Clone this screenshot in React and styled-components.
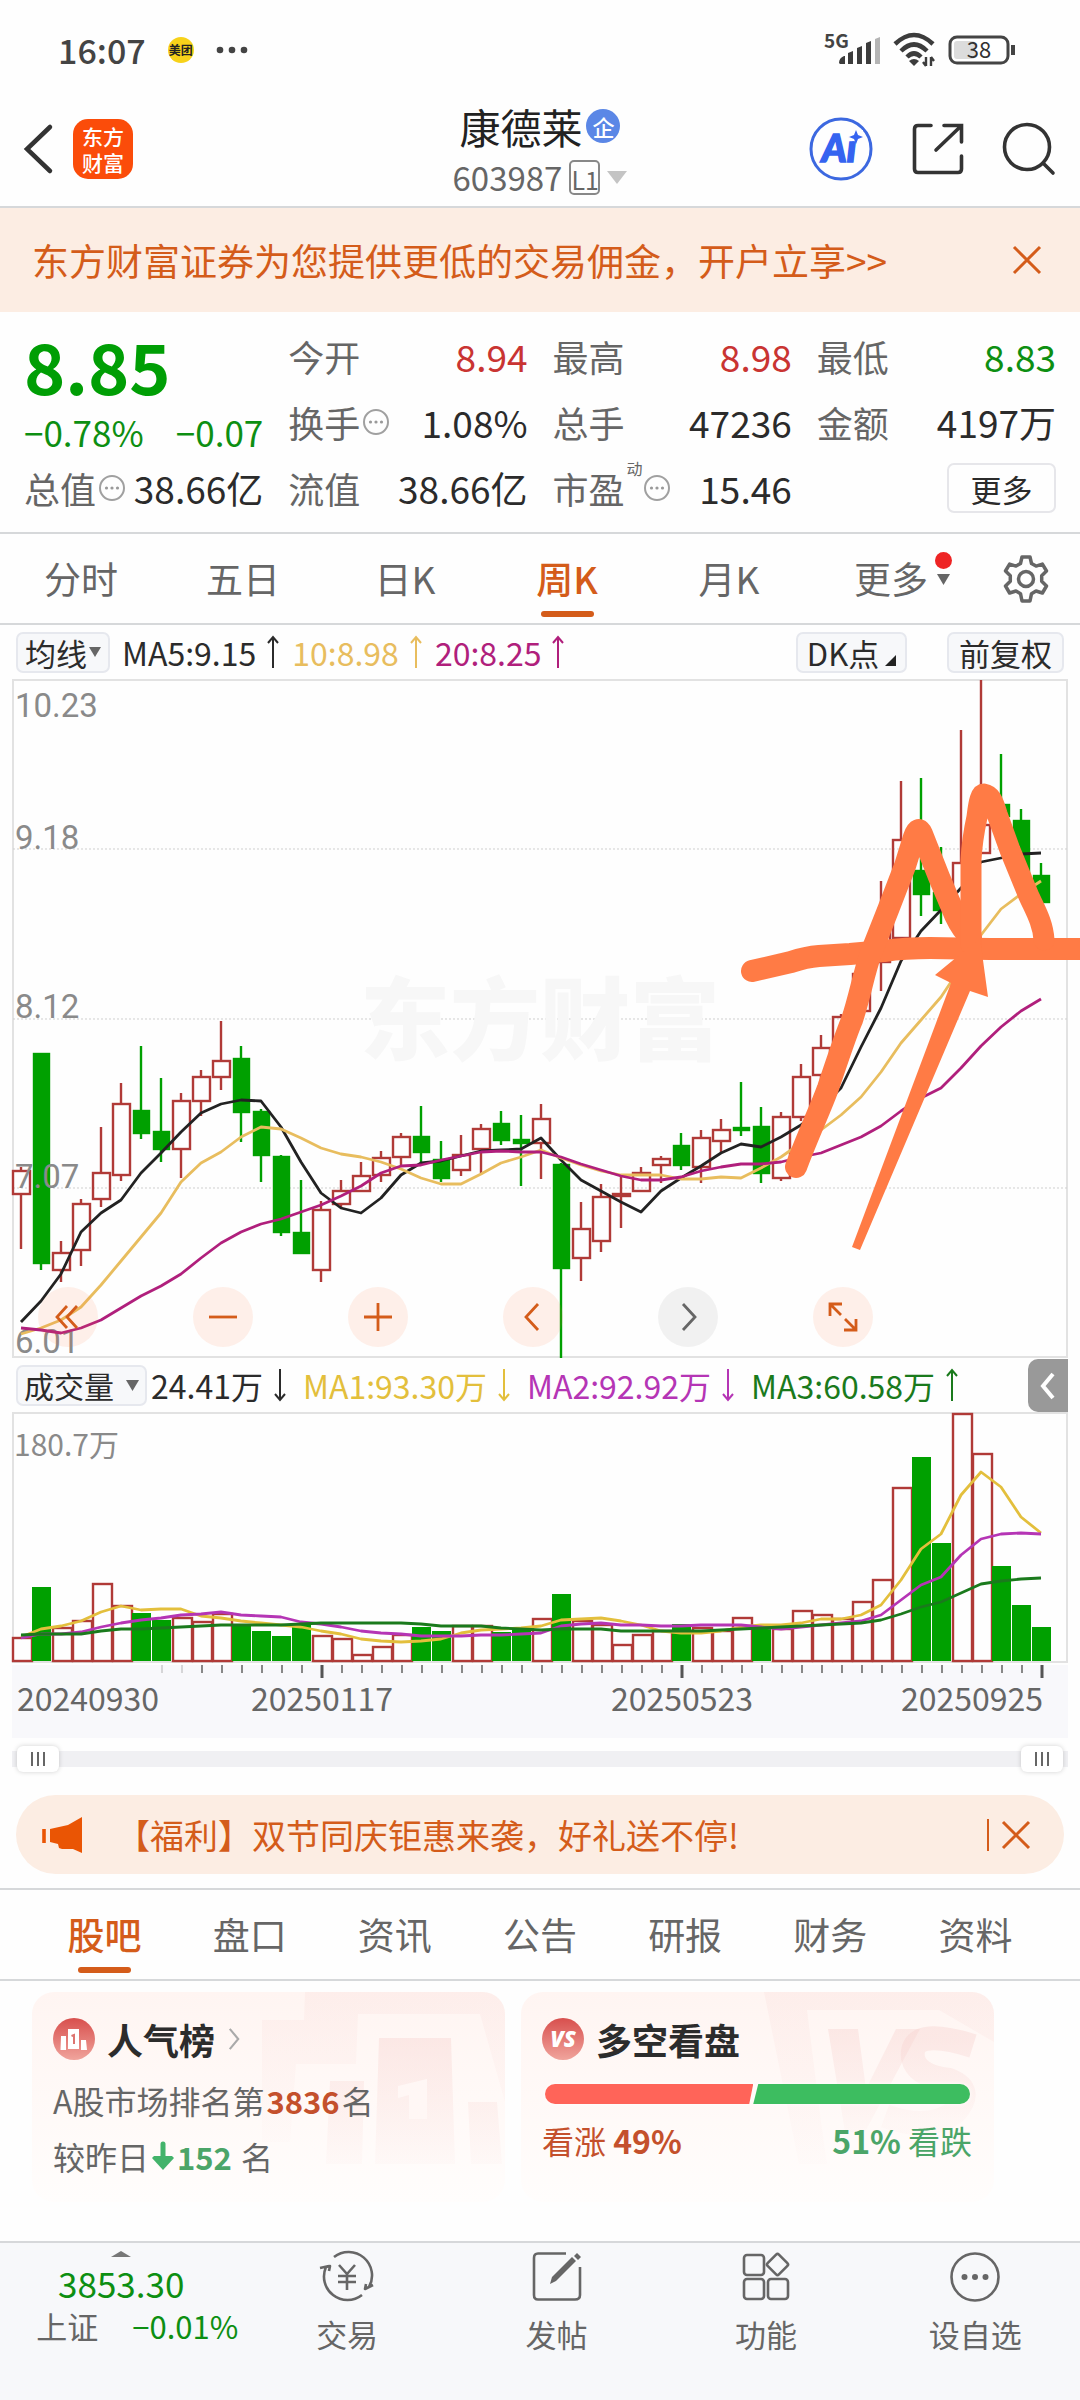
import React, { useState } from "react";
import styled, { createGlobalStyle, css } from "styled-components";

const color = {
  up: "#c93432",
  down: "#0d8f12",
  candleUp: "#b03a37",
  candleDown: "#00a000",
  accent: "#d45c1a",
  text: "#2b2b2b",
  muted: "#666",
  faint: "#8a8a8a",
  line: "#d6d8da",
  peach: "#fcede3",
  panel: "#f7f8fa",
  ma5: "#222",
  ma10: "#e8bd5e",
  ma20: "#b01f7c",
  vol1: "#e3bf3c",
  vol2: "#b535b5",
  vol3: "#1a7a1c",
  marker: "#ff7b45",
};

const GlobalStyle = createGlobalStyle`
  *, *::before, *::after { box-sizing: border-box; }
  body {
    margin: 0;
    background: #fefefe;
    color: ${color.text};
    font-family: "Noto Sans CJK SC", "Noto Sans", sans-serif;
    font-size: 32px;
    line-height: 1;
  }
  button { font: inherit; color: inherit; background: none; border: 0; padding: 0; margin: 0; cursor: pointer; }
  a { color: inherit; text-decoration: none; }
  svg { display: block; flex: none; overflow: visible; }
  h1, h2, p, dl, dd, dt { margin: 0; font-weight: 400; }
`;

const Page = styled.div`
  display: flex;
  flex-direction: column;
  min-height: 100vh;
  overflow-x: clip;
`;

/* Status bar */
const StatusBar = styled.div`
  display: flex;
  align-items: center;
  justify-content: space-between;
  height: 100px;
  padding: 0 64px 0 58px;
`;
const StatusGroup = styled.div`
  display: flex;
  align-items: center;
  gap: ${(p) => p.$gap}px;
`;
const Clock = styled.span`
  font-size: 34px;
  font-weight: 500;
  color: #444;
`;
const AppDot = styled.span`
  display: grid;
  place-items: center;
  width: 26px;
  height: 26px;
  border-radius: 50%;
  background: #f7d21a;
  color: #222;
  font-size: 12px;
  font-weight: 700;
  white-space: nowrap;
`;

/* Header */
const Header = styled.header`
  display: grid;
  grid-template-columns: 1fr auto 1fr;
  align-items: center;
  height: 108px;
  padding: 0 24px 8px;
  border-bottom: 2px solid ${color.line};
`;
const HeaderSide = styled.div`
  display: flex;
  align-items: center;
  justify-content: ${(p) => (p.$end ? "flex-end" : "flex-start")};
  gap: ${(p) => (p.$end ? 38 : 20)}px;
`;
const BrandLogo = styled.a`
  display: grid;
  place-content: center;
  width: 60px;
  height: 60px;
  border-radius: 15px;
  background: #fb4c0a;
  color: #fff;
  font-size: 21px;
  line-height: 26px;
  font-weight: 500;
  text-align: center;
`;
const TitleBlock = styled.div`
  display: flex;
  flex-direction: column;
  align-items: center;
  gap: 12px;
`;
const TitleRow = styled.div`
  display: flex;
  align-items: center;
  gap: 4px;
`;
const StockName = styled.h1`
  font-size: 41px;
  line-height: 44px;
  color: #222;
`;
const CompanyBadge = styled.span`
  display: grid;
  place-items: center;
  width: 34px;
  height: 34px;
  border-radius: 50%;
  background: #5b87e6;
  color: #fff;
  font-size: 22px;
  font-weight: 500;
`;
const CodeButton = styled.button`
  display: flex;
  align-items: center;
  gap: 7px;
  color: ${color.muted};
  font-size: 33px;
  line-height: 34px;
`;
const LevelTag = styled.span`
  display: grid;
  place-items: center;
  width: 31px;
  height: 35px;
  border: 2px solid #888;
  border-radius: 5px;
  font-size: 25px;
`;
const IconButton = styled.button`
  display: grid;
  place-items: center;
`;

/* Broker banner */
const Banner = styled.div`
  display: flex;
  align-items: center;
  justify-content: space-between;
  height: 104px;
  padding: 0 39px 0 32px;
  background: ${color.peach};
  color: ${color.accent};
`;
const BannerLink = styled.a`
  font-size: 37px;
  white-space: nowrap;
`;

/* Quote */
const Quote = styled.section`
  display: grid;
  grid-template-columns: repeat(4, 1fr);
  grid-template-rows: repeat(3, 66px);
  column-gap: 25px;
  height: 222px;
  padding: 11px 24px 0;
  border-bottom: 2px solid ${color.line};
`;
const PriceBox = styled.div`
  grid-row: span 2;
  display: flex;
  flex-direction: column;
  justify-content: space-between;
  padding: 5px 0 6px;
  color: ${color.down};
`;
const Price = styled.strong`
  font-size: 70px;
  line-height: 74px;
  font-weight: 700;
  color: #009e05;
`;
const PriceChange = styled.div`
  display: flex;
  justify-content: space-between;
  font-size: 35px;
  line-height: 35px;
`;
const Stat = styled.dl`
  display: flex;
  align-items: center;
  justify-content: space-between;
  white-space: nowrap;
`;
const StatLabel = styled.dt`
  display: flex;
  align-items: center;
  gap: 2px;
  font-size: 36px;
  color: ${color.muted};
`;
const StatNote = styled.sup`
  align-self: flex-start;
  font-size: 16px;
  line-height: 16px;
  margin: -10px -2px 0 0;
`;
const StatValue = styled.dd`
  font-size: 37px;
  color: ${(p) => p.$tone || color.text};
`;
const MoreButton = styled.button`
  align-self: center;
  justify-self: end;
  width: 109px;
  height: 50px;
  border: 2px solid #e6e6ea;
  border-radius: 7px;
  font-size: 31px;
`;

/* Tabs */
const PeriodTabs = styled.nav`
  display: grid;
  grid-template-columns: repeat(6, 162fr) 108fr;
  height: 91px;
  border-bottom: 2px solid ${color.line};
`;
const SectionTabs = styled.nav`
  display: grid;
  grid-template-columns: repeat(7, 1fr);
  height: 93px;
  margin-top: 14px;
  padding: 0 32px;
  border-top: 2px solid ${color.line};
  border-bottom: 2px solid ${color.line};
`;
const Tab = styled.button`
  display: flex;
  align-items: center;
  justify-content: center;
  position: relative;
  font-size: 37px;
  color: ${(p) => (p.$active ? color.accent : color.muted)};
  font-weight: ${(p) => (p.$active ? 500 : 400)};
  ${(p) =>
    p.$active &&
    css`
      &::after {
        content: "";
        position: absolute;
        bottom: 6px;
        width: 53px;
        height: 6px;
        border-radius: 3px;
        background: ${color.accent};
      }
    `}
`;
const TabMarks = styled.span`
  position: absolute;
  right: 20px;
  top: 18px;
  display: grid;
  justify-items: center;
  gap: 5px;
`;
const RedDot = styled.i`
  width: 17px;
  height: 17px;
  border-radius: 50%;
  background: #ee2424;
`;

/* Chart legends */
const Legend = styled.div`
  display: flex;
  align-items: center;
  height: 54px;
  padding: 0 16px;
  gap: ${(p) => p.$gap || 12}px;
  white-space: nowrap;
`;
const LegendItems = styled.div`
  display: flex;
  gap: 16px;
`;
const Chip = styled.button`
  display: flex;
  align-items: center;
  justify-content: center;
  gap: ${(p) => p.$gap || 2}px;
  width: ${(p) => p.$w}px;
  height: 41px;
  border: 2px solid #e6e8ee;
  border-radius: 7px;
  background: ${color.panel};
  font-size: ${(p) => p.$size || 31}px;
`;
const LegendItem = styled.span`
  display: flex;
  align-items: center;
  gap: 10px;
  color: ${(p) => p.$tone};
`;
const Spacer = styled.span`
  flex: 1;
`;
const ChipGroup = styled.div`
  display: flex;
  gap: 40px;
`;
const CollapseButton = styled.button`
  display: grid;
  place-items: center;
  align-self: stretch;
  width: 40px;
  margin: 1px -4px 0 0;
  border-radius: 10px 0 0 10px;
  background: #999;
`;

/* Charts */
const ChartFrame = styled.div`
  position: relative;
  svg.plot {
    width: 100%;
    height: auto;
  }
`;
const ChartControls = styled.div`
  position: absolute;
  left: 0;
  right: 0;
  bottom: 11px;
  display: flex;
  gap: 95px;
  padding-left: 38px;
`;
const RoundButton = styled.button`
  display: grid;
  place-items: center;
  width: 60px;
  height: 60px;
  border-radius: 50%;
  background: ${(p) => (p.$plain ? "rgba(0,0,0,.05)" : "rgba(255,120,60,.11)")};
`;

/* Range */
const RangeBar = styled.div`
  display: grid;
  align-items: center;
  height: 40px;
  margin: 0 12px;
  padding: 0 5px;
  border-radius: 8px;
  background: linear-gradient(#f0f0f3, #f0f0f3) center / 100% 16px no-repeat;
`;
const thumb = css`
  appearance: none;
  pointer-events: auto;
  width: 42px;
  height: 26px;
  border: 0;
  border-radius: 6px;
  background:
    linear-gradient(90deg, #666 2px, transparent 2px 6px, #666 6px 8px, transparent 8px 12px, #666 12px 14px) center / 14px 14px no-repeat,
    #fff;
  box-shadow: 0 0 5px rgba(0, 0, 0, 0.18);
`;
const RangeInput = styled.input`
  grid-area: 1 / 1;
  appearance: none;
  pointer-events: none;
  width: 100%;
  height: 26px;
  margin: 0;
  background: none;
  &::-webkit-slider-thumb { ${thumb} }
`;

/* Promo */
const Promo = styled.div`
  display: flex;
  align-items: center;
  height: 79px;
  margin: 16px 16px 0;
  padding: 0 34px 0 24px;
  border-radius: 40px;
  background: ${color.peach};
  color: ${color.accent};
`;
const PromoLink = styled.a`
  flex: 1;
  margin-left: 32px;
  font-size: 34px;
  white-space: nowrap;
`;
const PromoClose = styled.button`
  display: grid;
  place-items: center;
  height: 32px;
  padding-left: 13px;
  border-left: 2px solid ${color.accent};
`;

/* Cards */
const Cards = styled.section`
  display: grid;
  grid-template-columns: 1fr 1fr;
  gap: 16px;
  padding: 11px 86px 39px 32px;
`;
const Card = styled.article`
  position: relative;
  overflow: hidden;
  display: flex;
  flex-direction: column;
  height: 210px;
  padding: 26px 22px 0 21px;
  border-radius: 22px;
  background: linear-gradient(#fff5f2, #fffdfc);
  color: ${color.muted};
`;
const CardArt = styled.svg`
  position: absolute;
  right: 0;
  top: 0;
`;
const CardHead = styled.a`
  position: relative;
  display: flex;
  align-items: center;
  gap: 12px;
  height: 42px;
`;
const CardTitle = styled.h2`
  font-size: 36px;
  font-weight: 700;
  color: #2c2c2c;
`;
const CardLine = styled.p`
  position: relative;
  display: flex;
  align-items: center;
  gap: 2px;
  height: 56px;
  font-size: 32px;
`;
const CardBody = styled.div`
  margin-top: 12px;
`;
const Figure = styled.b`
  font-weight: 700;
  font-size: 31px;
  color: ${(p) => p.$tone};
`;
const VoteBar = styled.div`
  position: relative;
  display: flex;
  height: 20px;
  margin: 24px 2px 0 3px;
  filter: drop-shadow(0 0 2px #fff);
`;
const VoteShare = styled.span`
  background: ${(p) => (p.$bear ? "#3dbd60" : "#ff6459")};
  border-radius: ${(p) => (p.$bear ? "0 10px 10px 0" : "10px 0 0 10px")};
  clip-path: ${(p) =>
    p.$bear
      ? "polygon(5px 0, 100% 0, 100% 100%, 0 100%)"
      : "polygon(0 0, 100% 0, calc(100% - 4px) 100%, 0 100%)"};
`;
const VoteLabels = styled.div`
  position: relative;
  display: flex;
  justify-content: space-between;
  margin-top: 19px;
  font-size: 32px;
  line-height: 34px;
`;
const VoteLabel = styled.span`
  color: ${(p) => p.$tone};
`;

/* Bottom bar */
const BottomBar = styled.nav`
  flex: 1;
  display: grid;
  grid-template-columns: 242fr repeat(4, 209fr);
  align-items: start;
  min-height: 159px;
  border-top: 2px solid ${color.line};
  background: ${color.panel};
`;
const IndexButton = styled.button`
  display: flex;
  flex-direction: column;
  align-items: center;
  padding-top: 8px;
  color: ${color.down};
`;
const IndexValue = styled.span`
  margin-top: 8px;
  font-size: 35px;
  line-height: 35px;
`;
const IndexRow = styled.span`
  display: flex;
  justify-content: space-between;
  width: 202px;
  margin: 9px 0 0 32px;
  font-size: 31px;
  line-height: 34px;
`;
const MutedText = styled.span`
  color: ${color.muted};
`;
const NavButton = styled.button`
  display: flex;
  flex-direction: column;
  align-items: center;
  gap: 14px;
  padding-top: 8px;
  color: ${color.muted};
  font-size: 31px;
  line-height: 34px;
`;

/* Data: [rising, high, bodyTop, bodyBottom, low] in plot units */
const CANDLES = [
  [1,1167,1171,1194,1249],[0,1053,1054,1263,1270],[1,1241,1253,1270,1282],[1,1199,1204,1250,1266],
  [1,1127,1173,1199,1207],[1,1083,1104,1175,1181],[0,1046,1111,1133,1139],[0,1078,1132,1149,1162],
  [1,1093,1101,1149,1178],[1,1070,1077,1101,1116],[1,1021,1061,1077,1090],[0,1046,1059,1112,1142],
  [0,1109,1112,1155,1182],[0,1155,1157,1232,1236],[0,1180,1233,1253,1254],[1,1201,1210,1270,1282],
  [1,1180,1191,1204,1208],[1,1162,1176,1191,1191],[1,1151,1158,1175,1182],[1,1133,1137,1157,1165],
  [0,1106,1137,1152,1163],[0,1141,1160,1178,1182],[1,1135,1155,1170,1176],[1,1124,1129,1149,1173],
  [0,1111,1124,1140,1145],[0,1115,1140,1143,1186],[1,1104,1119,1143,1179],[0,1163,1165,1268,1358],
  [1,1202,1229,1258,1281],[1,1184,1197,1241,1252],[1,1177,1194,1196,1228],[1,1167,1173,1191,1191],
  [1,1156,1159,1165,1183],[0,1133,1146,1165,1170],[1,1130,1138,1167,1183],[1,1119,1130,1141,1152],
  [0,1082,1128,1130,1136],[0,1107,1127,1173,1183],[1,1112,1117,1178,1181],[1,1064,1077,1117,1121],
  [1,1035,1048,1075,1085],[1,1014,1017,1050,1050],[1,960,974,1011,1011],[1,881,927,962,991],
  [1,781,840,938,938],[0,778,871,894,916],[0,847,893,910,924],[1,730,863,905,905],
  [1,680,825,853,853],[0,754,805,816,816],[0,809,821,876,876],[0,863,876,902,907],
];
const MA5 = [1322,1301,1274,1232,1213,1200,1173,1153,1132,1113,1104,1100,1101,1127,1162,1193,1208,1213,1198,1175,1163,1161,1156,1151,1150,1149,1138,1160,1180,1191,1202,1212,1191,1178,1166,1153,1144,1147,1137,1125,1108,1088,1047,1008,961,931,910,888,862,858,854,853];
const MA10 = [1334,1328,1320,1307,1285,1261,1237,1213,1182,1163,1152,1137,1127,1129,1138,1148,1154,1157,1162,1169,1178,1184,1184,1174,1163,1157,1150,1158,1165,1171,1175,1175,1175,1179,1179,1177,1178,1168,1157,1143,1130,1115,1097,1072,1043,1020,997,967,935,909,894,881];
const MA20 = [1328,1330,1333,1328,1320,1308,1296,1286,1274,1258,1243,1232,1224,1219,1212,1205,1196,1186,1173,1166,1165,1160,1156,1152,1151,1152,1152,1157,1164,1170,1176,1180,1180,1177,1171,1167,1164,1164,1162,1157,1153,1145,1137,1126,1111,1098,1088,1068,1046,1027,1011,999];
const VOLUME_TOPS = [1638,1588,1628,1621,1584,1606,1614,1621,1618,1622,1614,1625,1632,1637,1626,1636,1639,1655,1647,1635,1628,1632,1626,1626,1633,1629,1619,1595,1621,1625,1645,1635,1631,1625,1628,1631,1618,1627,1629,1611,1615,1619,1602,1580,1488,1458,1544,1414,1454,1567,1606,1628];
const VOLUME_UP = CANDLES.map((c, i) => (i === 36 ? 1 : c[0]));
const VMA1 = [1637,1629,1626,1621,1612,1606,1610,1609,1609,1616,1618,1621,1623,1625,1627,1631,1634,1639,1641,1642,1641,1639,1633,1630,1629,1628,1626,1620,1619,1618,1621,1625,1631,1633,1633,1631,1627,1625,1625,1623,1619,1619,1615,1605,1580,1549,1534,1495,1472,1487,1517,1533];
const VMA2 = [1638,1634,1634,1632,1627,1623,1620,1618,1615,1614,1612,1615,1616,1617,1622,1624,1627,1631,1633,1634,1636,1636,1636,1635,1635,1634,1633,1626,1624,1623,1625,1625,1626,1626,1625,1625,1625,1627,1629,1627,1625,1623,1621,1615,1600,1585,1577,1555,1539,1534,1533,1534];
const VMA3 = [1635,1634,1634,1634,1631,1629,1629,1628,1627,1626,1625,1625,1625,1625,1624,1623,1623,1623,1623,1623,1624,1626,1626,1626,1628,1629,1630,1629,1629,1629,1631,1631,1631,1631,1631,1630,1629,1628,1627,1626,1625,1624,1623,1620,1614,1607,1602,1593,1584,1581,1579,1578];

const cx = (i) => 21 + i * 20;
const toPoints = (values) => values.map((y, i) => `${cx(i)},${y}`).join(" ");

const AXIS_FONT = "Roboto, 'Noto Sans CJK SC', sans-serif";

function Line({ values, stroke }) {
  return <polyline points={toPoints(values)} fill="none" stroke={stroke} strokeWidth="2.8" strokeLinejoin="round" />;
}

function PriceChart() {
  return (
    <svg className="plot" viewBox="0 679 1080 679" role="img" aria-label="周K线图">
      <rect x="13" y="680" width="1054" height="677" fill="none" stroke="#e2e2e2" strokeWidth="2" />
      {[849, 1019, 1188].map((y) => (
        <line key={y} x1="13" x2="1067" y1={y} y2={y} stroke="#cfcfcf" strokeDasharray="2 2" />
      ))}
      <text x="540" y="1053" textAnchor="middle" fontFamily="Noto Sans CJK SC" fontWeight="900" fontSize="90" fill="#f7f7f7">东方财富</text>
      {CANDLES.map(([up, high, top, bottom, low], i) => {
        const tone = up ? color.candleUp : color.candleDown;
        return (
          <g key={i} stroke={tone} strokeWidth="2.4">
            <line x1={cx(i)} x2={cx(i)} y1={high} y2={top} />
            <line x1={cx(i)} x2={cx(i)} y1={bottom} y2={low} />
            <rect x={cx(i) - (up ? 8 : 7)} y={top} width={up ? 17 : 15} height={bottom - top} fill={up ? "none" : tone} />
          </g>
        );
      })}
      <g fontFamily={AXIS_FONT} fontSize="33" fill={color.faint}>
        <text x="15" y="717">10.23</text>
        <text x="15" y="849">9.18</text>
        <text x="15" y="1018">8.12</text>
        <text x="15" y="1188">7.07</text>
        <text x="15" y="1353">6.01</text>
      </g>
      <Line values={MA5} stroke={color.ma5} />
      <Line values={MA10} stroke={color.ma10} />
      <Line values={MA20} stroke={color.ma20} />
      <g fill="none" stroke={color.marker} strokeLinecap="round" strokeLinejoin="round">
        <path strokeWidth="22" d="M752 971 L791 962 Q806 957 819 956 L850 954 L884 951 Q905 948 930 948 L990 949 L1090 949" />
        <path strokeWidth="22" d="M796 1167 C810 1130 820 1110 828 1088 C840 1052 846 1034 852 1020 C860 996 864 972 871 953 L888 910 L905 866 L914 837 Q918 825 922 834 L939 877 L955 915 Q962 930 971 938" />
        <path strokeWidth="21" d="M971 945 L971 860 Q972 840 977 817 C979 800 981 794 984 794 C990 795 993 800 997 814 L1010 850 L1028 894 C1034 908 1043 922 1044 940" />
      </g>
      <path fill={color.marker} d="M852 1247 L951 983 L935 975 L980 938 L988 997 L970 991 L860 1250 Z" />
    </svg>
  );
}

function VolumeChart() {
  const major = [15, 33, 51];
  return (
    <svg className="plot" viewBox="0 1412 1080 327" role="img" aria-label="成交量图">
      <rect x="13" y="1413" width="1054" height="249" fill="none" stroke="#e2e2e2" strokeWidth="2" />
      {VOLUME_TOPS.map((top, i) =>
        VOLUME_UP[i] ? (
          <rect key={i} x={cx(i) - 8} y={top} width="19" height={1661 - top} fill="none" stroke={color.candleUp} strokeWidth="2.4" />
        ) : (
          <rect key={i} x={cx(i) - 9} y={top - 1} width="19" height={1662 - top} fill={color.candleDown} />
        )
      )}
      <text x="14" y="1456" fontSize="30" fill={color.faint}>180.7万</text>
      <Line values={VMA1} stroke={color.vol1} />
      <Line values={VMA2} stroke={color.vol2} />
      <Line values={VMA3} stroke={color.vol3} />
      <rect x="12" y="1665" width="1056" height="73" fill="#f8f8fb" />
      {CANDLES.map((_, i) =>
        i < 7 ? null : (
          <line
            key={i}
            x1={cx(i) + 1}
            x2={cx(i) + 1}
            y1="1665"
            y2={major.includes(i) ? 1678 : 1673}
            stroke={major.includes(i) ? "#555" : "#888"}
            strokeWidth={major.includes(i) ? 3 : 2}
            opacity={i < 9 ? 0.3 : 1}
          />
        )
      )}
      <g fontSize="32" fill={color.muted}>
        <text x="17" y="1711">20240930</text>
        <text x="322" y="1711" textAnchor="middle">20250117</text>
        <text x="682" y="1711" textAnchor="middle">20250523</text>
        <text x="1043" y="1711" textAnchor="end">20250925</text>
      </g>
    </svg>
  );
}

const Arrow = ({ down }) => (
  <svg width="14" height="34" viewBox="0 0 14 34" fill="none" stroke="currentColor" strokeWidth="2">
    {down ? <path d="M7 1v31M2 26l5 6 5-6" /> : <path d="M7 33V2M2 8l5-6 5 6" />}
  </svg>
);
const Caret = ({ w = 12, h = 10, fill = "#666", up }) => (
  <svg width={w} height={h} viewBox="0 0 12 10" preserveAspectRatio="none">
    <path d={up ? "M0 10h12L6 0z" : "M0 0h12L6 10z"} fill={fill} />
  </svg>
);
const Cross = ({ size = 28 }) => (
  <svg width={size} height={size} viewBox="0 0 28 28" stroke={color.accent} strokeWidth="3">
    <path d="M1 1l26 26M27 1L1 27" />
  </svg>
);
const InfoDot = () => (
  <svg width="28" height="28" viewBox="0 0 28 28">
    <circle cx="14" cy="14" r="12" fill="none" stroke="#a0a0a0" strokeWidth="2" />
    <g fill="#999"><circle cx="8.500" cy="14" r="1.600" /><circle cx="14" cy="14" r="1.600" /><circle cx="19.500" cy="14" r="1.600" /></g>
  </svg>
);
const SignalIcon = () => (
  <svg width="58" height="34" viewBox="0 0 58 34">
    <text x="0" y="15" fontFamily="Noto Sans CJK SC" fontWeight="700" fontSize="19" fill="#444">5G</text>
    <path fill="#3c3c3c" d="M15 30q0-5 5-7h1v8h-5zM24 20l5-2v13h-5zM33 15l5-2v18h-5zM42 10l5-2v23h-5z" />
    <path fill="#b5b5b5" d="M51 6l5-2v27h-5z" />
  </svg>
);
const WifiIcon = () => (
  <svg width="44" height="34" viewBox="0 0 44 34" fill="none" stroke="#3c3c3c" strokeWidth="4.500">
    <path d="M2 11Q21-7 40 11M8 18Q21 5 34 18M14 24Q21 17 28 24" />
    <path d="M16 28q5-4 10 0l-5 5z" fill="#3c3c3c" stroke="none" />
    <path d="M33 24v9M38 24v9M33 33l-3-4M38 24l3 4" strokeWidth="2.400" />
  </svg>
);
const BatteryIcon = () => (
  <svg width="68" height="30" viewBox="0 0 68 30">
    <rect x="2" y="2" width="58" height="26" rx="7" fill="#fff" stroke="#444" strokeWidth="3" />
    <rect x="6" y="6" width="21" height="18" rx="3" fill="#dcdcdc" />
    <path d="M65 10v10" stroke="#444" strokeWidth="4" />
    <text x="31" y="23" textAnchor="middle" fontFamily="Noto Sans CJK SC" fontSize="22" fill="#333">38</text>
  </svg>
);
const BackIcon = () => (
  <svg width="29" height="50" viewBox="0 0 29 50" fill="none" stroke="#333" strokeWidth="4.500" strokeLinecap="round">
    <path d="M26 3L3 25l23 22" />
  </svg>
);
const AiIcon = () => (
  <svg width="66" height="66" viewBox="0 0 66 66">
    <circle cx="33" cy="33" r="30" fill="none" stroke="#3c68e0" strokeWidth="3" />
    <text x="31" y="46" textAnchor="middle" fontFamily="Lato, sans-serif" fontWeight="900" fontStyle="italic" fontSize="38" fill="#3563f0" stroke="#3563f0" strokeWidth="1.500">Ai</text>
    <rect x="41" y="14" width="14" height="11" fill="#fefefe" />
    <path d="M48 14l2 5 5 2-5 2-2 5-2-5-5-2 5-2z" fill="#3563f0" />
  </svg>
);
const ShareIcon = () => (
  <svg width="52" height="52" viewBox="0 0 52 52" fill="none" stroke="#333" strokeWidth="3.600" strokeLinecap="round">
    <path d="M19 2.500H6Q2.500 2.500 2.500 6V46Q2.500 49.500 6 49.500H46Q49.500 49.500 49.500 46V33" />
    <path d="M32 2.500H49.500V19M48 4L24 27" />
  </svg>
);
const SearchIcon = () => (
  <svg width="54" height="54" viewBox="0 0 54 54" fill="none" stroke="#333" strokeWidth="3.600" strokeLinecap="round">
    <circle cx="25" cy="25" r="22.500" />
    <path d="M41 41l10 10" />
  </svg>
);
const GearIcon = () => (
  <svg width="48" height="48" viewBox="0 0 48 48" fill="none" stroke="#666" strokeWidth="3.500" strokeLinejoin="round">
    <path d="M20 2h8l1.500 6.500 4.500 2.600 6.400-2L44.500 16l-4.800 4.700v5.600L44.500 31l-4.100 7-6.400-2-4.500 2.700L28 46h-8l-1.500-7.300L14 36l-6.400 2-4.100-7 4.800-4.700v-5.600L3.500 16l4.100-6.900 6.400 2 4.500-2.600z" />
    <circle cx="24" cy="24" r="7.500" />
  </svg>
);
const HornIcon = () => (
  <svg width="44" height="36" viewBox="0 0 44 36" fill="#ea5504">
    <path d="M42 0v36l-9-4H22l-3-1-1-4-8-2V12L28 8z" />
    <path d="M4 12v14" stroke="#ea5504" strokeWidth="3.600" />
  </svg>
);
const RankIcon = () => (
  <svg width="42" height="42" viewBox="0 0 42 42">
    <defs><linearGradient id="badge" x2="0" y2="1"><stop offset="0" stopColor="#d84f4d" /><stop offset="1" stopColor="#f0a49c" /></linearGradient></defs>
    <circle cx="21" cy="21" r="21" fill="url(#badge)" />
    <path fill="#fff" d="M8 18h5v14H7.500zM15 11h11v20H15zM28 22h5l1 10h-6z" />
    <path d="M18.500 18l2.500-1v9" fill="none" stroke="#dd7470" strokeWidth="2" />
  </svg>
);
const VsIcon = () => (
  <svg width="42" height="42" viewBox="0 0 42 42">
    <circle cx="21" cy="21" r="21" fill="url(#badge)" />
    <text x="21" y="29" textAnchor="middle" fontFamily="Open Sans, sans-serif" fontWeight="800" fontStyle="italic" fontSize="22" fill="#fff">VS</text>
  </svg>
);
const RankArt = () => (
  <CardArt width="245" height="180" viewBox="0 0 245 180" aria-hidden="true">
    <defs><linearGradient id="fade" x2="0" y2="1"><stop offset="0" stopColor="#f7d3d0" stopOpacity=".42" /><stop offset="1" stopColor="#f7d3d0" stopOpacity=".08" /></linearGradient></defs>
    <path fill="url(#fade)" opacity=".5" d="M45 0H245V110L220 22H98L96 72H36L30 150H2V28H44z" />
    <path fill="url(#fade)" d="M119 46h72l4 126h-80zM70 89h34l-2 83H66zM208 110h29l5 62h-31z" />
    <path fill="#fff7f5" d="M138 94l29-7v40h-18v-24l-11 3z" />
  </CardArt>
);
const VsArt = () => (
  <CardArt width="245" height="180" viewBox="0 0 245 180" aria-hidden="true">
    <path fill="url(#fade)" opacity=".5" d="M15 0H245V50L190 18H58L72 130 78 172H50z" />
    <path fill="url(#fade)" d="M79 37h30l8 60 30-60h24L116 140H96z" />
    <path fill="none" stroke="url(#fade)" strokeWidth="24" d="M224 54Q160 34 164 66Q168 84 200 88Q226 98 206 120Q180 140 136 124" />
  </CardArt>
);
const DropArrow = () => (
  <svg width="24" height="30" viewBox="0 0 24 30">
    <path d="M12 3v16" stroke="#43b36b" strokeWidth="5" strokeLinecap="round" />
    <path d="M3 15h18l2 2-11 12L1 17z" fill="#43b36b" />
  </svg>
);
const Chevron = ({ left, stroke, w = 14, h = 26, width = 3 }) => (
  <svg width={w} height={h} viewBox="0 0 14 26" fill="none" stroke={stroke} strokeWidth={width}>
    <path d={left ? "M12 1L2 13l10 12" : "M2 1l10 12L2 25"} />
  </svg>
);
const Stroke = ({ children, size = 30, tone = color.accent }) => (
  <svg width={size} height={size} viewBox="0 0 30 30" fill="none" stroke={tone} strokeWidth="2.800">{children}</svg>
);
const NavIcon = ({ children }) => (
  <svg width="58" height="52" viewBox="-4 0 58 52" fill="none" stroke="#666" strokeWidth="2.600" strokeLinejoin="round">{children}</svg>
);

const STATS = [
  { label: "今开", value: "8.94", tone: color.up },
  { label: "最高", value: "8.98", tone: color.up },
  { label: "最低", value: "8.83", tone: color.down },
  { label: "换手", value: "1.08%", info: true },
  { label: "总手", value: "47236" },
  { label: "金额", value: "4197万" },
  { label: "总值", value: "38.66亿", info: true },
  { label: "流值", value: "38.66亿" },
  { label: "市盈", value: "15.46", info: true, note: "动" },
];
const PERIODS = ["分时", "五日", "日K", "周K", "月K", "更多"];
const SECTIONS = ["股吧", "盘口", "资讯", "公告", "研报", "财务", "资料"];
const CONTROLS = [
  { name: "最早", icon: <Stroke><path d="M14 4L4 15l10 11M24 4L14 15l10 11" /></Stroke> },
  { name: "缩小", icon: <Stroke><path d="M1 15h28" /></Stroke> },
  { name: "放大", icon: <Stroke><path d="M1 15h28M15 1v28" /></Stroke> },
  { name: "左移", icon: <Stroke><path d="M20 2L8 15l12 13" /></Stroke> },
  { name: "右移", plain: true, icon: <Stroke tone="#666"><path d="M10 2l12 13-12 13" /></Stroke> },
  { name: "全屏", icon: <Stroke><path d="M2 14V2h12M2 2l11 11M28 17v11H16M28 28L17 17" /></Stroke> },
];
const NAV = [
  { label: "交易", icon: (<><path d="M12 6A23.500 23.500 0 0 1 47 36l-4 2 1-5M43 38l8-4" /><path d="M40 44A23.500 23.500 0 0 1 4 16l4-1-1 5M7 15l-9 2" /><path d="M17 14l8 9 8-9M25 23v16M16 25h18M16 31h18" /></>) },
  { label: "发帖", icon: (<><path d="M34 2.500H6Q2 2.500 2 7V44Q2 48.500 6 48.500H43Q48 48.500 48 44V16" /><path d="M18 33l2-7L40 6l4 4-20 20z" fill="#666" stroke="none" /><path d="M42 5l3-3 4 4-3 3z" fill="#666" stroke="none" /></>) },
  { label: "功能", icon: (<><rect x="3" y="4" width="20" height="20" rx="3" /><rect x="3" y="28" width="20" height="20" rx="3" /><rect x="27" y="28" width="20" height="20" rx="3" /><rect x="28.500" y="5.500" width="16" height="16" rx="2" transform="rotate(45 36.500 13.500)" /></>) },
  { label: "设自选", icon: (<><circle cx="25" cy="26" r="23.500" /><g fill="#666" stroke="none"><circle cx="14.500" cy="26" r="3" /><circle cx="25" cy="26" r="3" /><circle cx="35.500" cy="26" r="3" /></g></>) },
];

function StatCell({ label, value, tone, info, note }) {
  return (
    <Stat>
      <StatLabel>
        {label}
        {note && <StatNote>{note}</StatNote>}
        {info && <InfoDot />}
      </StatLabel>
      <StatValue $tone={tone}>{value}</StatValue>
    </Stat>
  );
}

export default function App() {
  const [period, setPeriod] = useState("周K");
  const [section, setSection] = useState("股吧");
  const [range, setRange] = useState([0, 100]);

  return (
    <Page>
      <GlobalStyle />
      <StatusBar>
        <StatusGroup $gap={22}>
          <Clock>16:07</Clock>
          <AppDot>美团</AppDot>
          <svg width="32" height="8" viewBox="0 0 32 8" fill="#444"><circle cx="4" cy="4" r="3.300" /><circle cx="16" cy="4" r="3.300" /><circle cx="28" cy="4" r="3.300" /></svg>
        </StatusGroup>
        <StatusGroup $gap={11}>
          <SignalIcon />
          <WifiIcon />
          <BatteryIcon />
        </StatusGroup>
      </StatusBar>

      <Header>
        <HeaderSide>
          <IconButton aria-label="返回"><BackIcon /></IconButton>
          <BrandLogo href="#home">东方<br />财富</BrandLogo>
        </HeaderSide>
        <TitleBlock>
          <TitleRow>
            <StockName>康德莱</StockName>
            <CompanyBadge>企</CompanyBadge>
          </TitleRow>
          <CodeButton>
            603987
            <LevelTag>L1</LevelTag>
            <Caret w={20} h={13} fill="#c4c4c4" />
          </CodeButton>
        </TitleBlock>
        <HeaderSide $end>
          <IconButton aria-label="AI"><AiIcon /></IconButton>
          <IconButton aria-label="分享"><ShareIcon /></IconButton>
          <IconButton aria-label="搜索"><SearchIcon /></IconButton>
        </HeaderSide>
      </Header>

      <Banner>
        <BannerLink href="#open">东方财富证券为您提供更低的交易佣金，开户立享&gt;&gt;</BannerLink>
        <IconButton aria-label="关闭"><Cross /></IconButton>
      </Banner>

      <Quote>
        <PriceBox>
          <Price>8.85</Price>
          <PriceChange><span>−0.78%</span><span>−0.07</span></PriceChange>
        </PriceBox>
        {STATS.map((s) => <StatCell key={s.label} {...s} />)}
        <MoreButton>更多</MoreButton>
      </Quote>

      <PeriodTabs>
        {PERIODS.map((p) => (
          <Tab key={p} $active={p === period} onClick={() => setPeriod(p)}>
            {p}
            {p === "更多" && <TabMarks><RedDot /><Caret w={13} h={11} /></TabMarks>}
          </Tab>
        ))}
        <IconButton aria-label="设置"><GearIcon /></IconButton>
      </PeriodTabs>

      <Legend>
        <Chip $w={94}>均线<Caret /></Chip>
        <LegendItem $tone="#2b2b2b">MA5:9.15<Arrow /></LegendItem>
        <LegendItem $tone={color.ma10}>10:8.98<Arrow /></LegendItem>
        <LegendItem $tone={color.ma20}>20:8.25<Arrow /></LegendItem>
        <Spacer />
        <ChipGroup>
          <Chip $w={111} $gap={6}>
            DK点
            <svg width="11" height="30" viewBox="0 0 11 30"><path d="M11 18v11H0z" fill="#222" /></svg>
          </Chip>
          <Chip $w={117}>前复权</Chip>
        </ChipGroup>
      </Legend>

      <ChartFrame>
        <PriceChart />
        <ChartControls>
          {CONTROLS.map((c) => (
            <RoundButton key={c.name} $plain={c.plain} aria-label={c.name}>{c.icon}</RoundButton>
          ))}
        </ChartControls>
      </ChartFrame>

      <Legend $gap={4}>
        <Chip $w={131} $gap={12} $size={30}>成交量<Caret w={13} h={11} /></Chip>
        <LegendItems>
          <LegendItem $tone="#2b2b2b">24.41万<Arrow down /></LegendItem>
          <LegendItem $tone={color.vol1}>MA1:93.30万<Arrow down /></LegendItem>
          <LegendItem $tone={color.vol2}>MA2:92.92万<Arrow down /></LegendItem>
          <LegendItem $tone={color.vol3}>MA3:60.58万<Arrow /></LegendItem>
        </LegendItems>
        <Spacer />
        <CollapseButton aria-label="收起"><Chevron left stroke="#fff" h={26} width={4} /></CollapseButton>
      </Legend>

      <ChartFrame><VolumeChart /></ChartFrame>

      <RangeBar>
        <RangeInput type="range" aria-label="起始" value={range[0]} onChange={(e) => setRange([+e.target.value, range[1]])} />
        <RangeInput type="range" aria-label="结束" value={range[1]} onChange={(e) => setRange([range[0], +e.target.value])} />
      </RangeBar>

      <Promo>
        <HornIcon />
        <PromoLink href="#promo">【福利】双节同庆钜惠来袭，好礼送不停!</PromoLink>
        <PromoClose aria-label="关闭"><Cross /></PromoClose>
      </Promo>

      <SectionTabs>
        {SECTIONS.map((s) => (
          <Tab key={s} $active={s === section} onClick={() => setSection(s)}>{s}</Tab>
        ))}
      </SectionTabs>

      <Cards>
        <Card>
          <RankArt />
          <CardHead href="#rank">
            <RankIcon />
            <CardTitle>人气榜</CardTitle>
            <Chevron stroke="#aaa" h={22} width={2.5} />
          </CardHead>
          <CardBody>
            <CardLine>A股市场排名第<Figure $tone="#c4502c">3836</Figure>名</CardLine>
            <CardLine>较昨日<DropArrow /><Figure $tone="#4ba568">152</Figure>&nbsp;名</CardLine>
          </CardBody>
        </Card>
        <Card>
          <VsArt />
          <CardHead href="#vote">
            <VsIcon />
            <CardTitle>多空看盘</CardTitle>
          </CardHead>
          <VoteBar>
            <VoteShare style={{ flex: 49 }} />
            <VoteShare $bear style={{ flex: 51 }} />
          </VoteBar>
          <VoteLabels>
            <VoteLabel $tone="#c4502c">看涨 <b>49%</b></VoteLabel>
            <VoteLabel $tone="#4ba568"><b>51%</b> 看跌</VoteLabel>
          </VoteLabels>
        </Card>
      </Cards>

      <BottomBar>
        <IndexButton>
          <Caret w={20} h={6} fill="#777" up />
          <IndexValue>3853.30</IndexValue>
          <IndexRow><MutedText>上证</MutedText><span>−0.01%</span></IndexRow>
        </IndexButton>
        {NAV.map((n) => (
          <NavButton key={n.label}>
            <NavIcon>{n.icon}</NavIcon>
            {n.label}
          </NavButton>
        ))}
      </BottomBar>
    </Page>
  );
}
